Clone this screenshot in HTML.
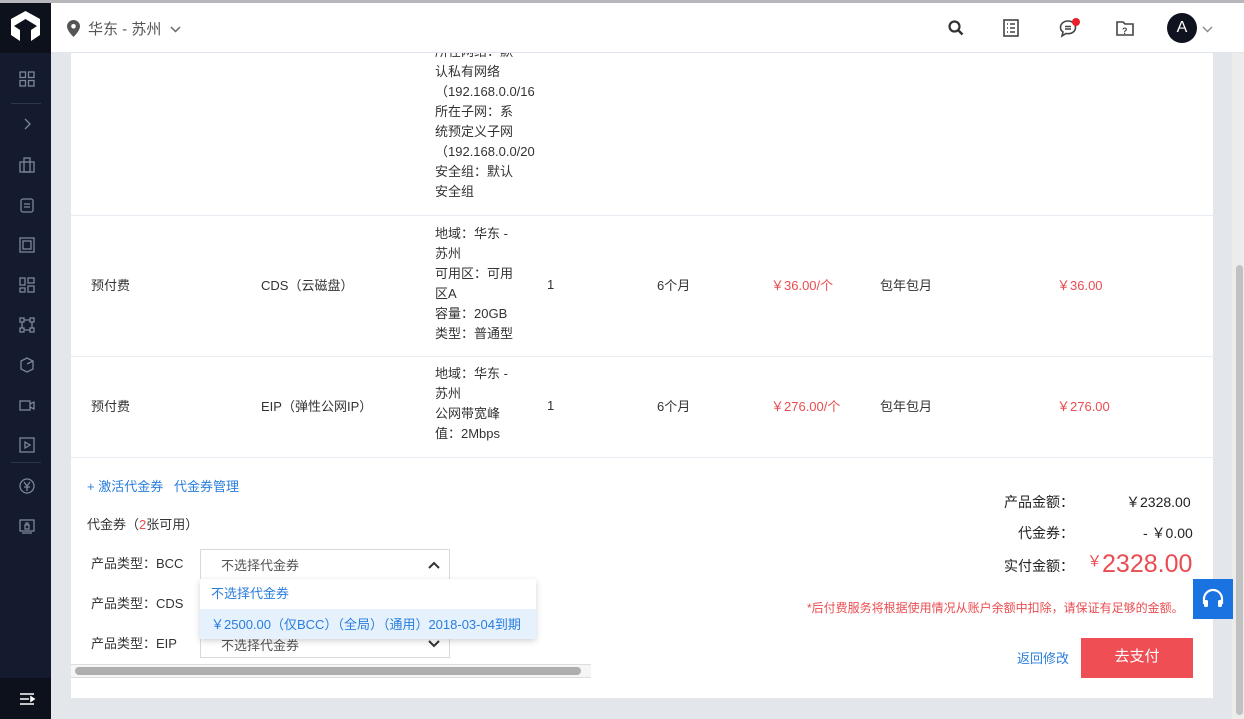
<!DOCTYPE html>
<html><head><meta charset="utf-8"><style>
*{margin:0;padding:0;box-sizing:border-box}
body{width:1244px;height:719px;overflow:hidden;background:#e3e7ec;font-family:"Liberation Sans","Noto Sans CJK SC",sans-serif;font-size:13px;color:#333;position:relative}
.a{position:absolute;white-space:nowrap}
.side{position:absolute;left:0;top:0;width:51px;height:719px;background:#141b2e;z-index:5}
.ic{position:absolute;left:18px;width:18px;height:18px}
.ic svg{width:18px;height:18px;stroke:#7c869c;fill:none;stroke-width:1.3}
.top{position:absolute;left:51px;top:3px;width:1193px;height:50px;background:#fff;border-bottom:1px solid #e0e6ee;z-index:5}
.panel{position:absolute;left:71px;top:53px;width:1142px;height:645px;background:#fff}
.hl{position:absolute;left:71px;width:1142px;height:1px;background:#e8ecf2}
.red{color:#ea4c50}
.blue{color:#2a7ddc}
.sel{position:absolute;left:200px;width:250px;height:31px;border:1px solid #d6d9de;background:#fff;padding:5px 0 0 20px;color:#555}
</style></head><body>
<div class="a" style="left:0;top:0;width:1244px;height:3px;background:#b8b8bc;z-index:6"></div>
<div class="side">
 <div style="position:absolute;left:0;top:0;width:51px;height:53px;background:#0d111c"></div>
 <svg style="position:absolute;left:9px;top:10px" width="33" height="35" viewBox="0 0 33 35"><path d="M16.5 1 L31 9 L31 25 L22 31 L22 20 L28 16 L16.5 9 L5 16 L11 20 L11 31 L2 25 L2 9 Z" fill="#fff"/></svg>
 <div style="position:absolute;left:11px;top:103px;width:30px;height:1px;background:#2e3750"></div>
 <div style="position:absolute;left:11px;top:462px;width:30px;height:1px;background:#2e3750"></div>
 <div style="position:absolute;left:0;top:678px;width:51px;height:41px;background:#0d111c"></div>
 <div class="ic" style="top:70px"><svg viewBox="0 0 18 18"><rect x="2" y="2" width="5.5" height="5.5"/><rect x="10.5" y="2" width="5.5" height="5.5"/><rect x="2" y="10.5" width="5.5" height="5.5"/><rect x="10.5" y="10.5" width="5.5" height="5.5"/></svg></div>
 <div class="ic" style="top:115px"><svg viewBox="0 0 18 18"><path d="M7 4l5 5-5 5"/></svg></div>
 <div class="ic" style="top:156px"><svg viewBox="0 0 18 18"><rect x="2" y="6" width="14" height="10"/><rect x="6" y="2" width="6" height="14"/></svg></div>
 <div class="ic" style="top:196px"><svg viewBox="0 0 18 18"><rect x="3" y="3" width="12" height="13" rx="2"/><path d="M6 8h6M6 11h6"/></svg></div>
 <div class="ic" style="top:236px"><svg viewBox="0 0 18 18"><rect x="2" y="2" width="14" height="14"/><rect x="5" y="5" width="8" height="8"/></svg></div>
 <div class="ic" style="top:276px"><svg viewBox="0 0 18 18"><rect x="2" y="2" width="5" height="7"/><rect x="10" y="2" width="6" height="5"/><rect x="2" y="12" width="5" height="4"/><rect x="10" y="10" width="6" height="6"/></svg></div>
 <div class="ic" style="top:316px"><svg viewBox="0 0 18 18"><rect x="2" y="2" width="4" height="4"/><rect x="12" y="2" width="4" height="4"/><rect x="2" y="12" width="4" height="4"/><rect x="12" y="12" width="4" height="4"/><path d="M6 4h6M6 14h6M4 6v6M14 6v6"/></svg></div>
 <div class="ic" style="top:356px"><svg viewBox="0 0 18 18"><path d="M3 5l6-3 6 3v8l-6 3-6-3z M9 8l6-3"/></svg></div>
 <div class="ic" style="top:396px"><svg viewBox="0 0 18 18"><rect x="2" y="5" width="10" height="9"/><path d="M12 8l4-2v7l-4-2"/></svg></div>
 <div class="ic" style="top:436px"><svg viewBox="0 0 18 18"><rect x="2" y="2" width="14" height="14"/><path d="M7 6l5 3-5 3z"/></svg></div>
 <div class="ic" style="top:477px"><svg viewBox="0 0 18 18"><circle cx="9" cy="9" r="7"/><path d="M6 5l3 4 3-4M9 9v5M6 10h6"/></svg></div>
 <div class="ic" style="top:517px"><svg viewBox="0 0 18 18"><rect x="2" y="3" width="14" height="11"/><path d="M4 16h10M7 8h4v4H7zM8 8V6h2v2"/></svg></div>
 <div class="ic" style="top:690px"><svg viewBox="0 0 18 18" style="stroke:#fff;stroke-width:1.6"><path d="M2 4h14M2 9h9M2 14h14"/><path d="M13 7l3 2-3 2z" fill="#fff"/></svg></div>
</div>
<div class="top">
 <svg class="a" style="left:16px;top:17px" width="13" height="17" viewBox="0 0 13 17"><path d="M6.5 0C3 0 0 2.8 0 6.3 0 11 6.5 17 6.5 17S13 11 13 6.3C13 2.8 10 0 6.5 0z" fill="#555"/><circle cx="6.5" cy="6.3" r="2.3" fill="#fff"/></svg>
 <div class="a" style="left:37px;top:15px;font-size:15px;color:#555">华东 - 苏州</div>
 <svg class="a" style="left:119px;top:23px" width="11" height="7"><path d="M1 1l4.5 4.5L10 1" stroke="#666" stroke-width="1.5" fill="none"/></svg>
 <svg class="a" style="left:897px;top:17px" width="16" height="16"><circle cx="6.5" cy="6.5" r="5" stroke="#333" stroke-width="2.2" fill="none"/><path d="M10 10l4.5 4.5" stroke="#333" stroke-width="2.5"/></svg>
 <svg class="a" style="left:952px;top:16px" width="16" height="18"><rect x="1" y="1" width="14" height="16" stroke="#444" stroke-width="1.6" fill="none"/><path d="M4 5h1M7 5h5M4 9h1M7 9h5M4 13h1M7 13h5" stroke="#444" stroke-width="1.5"/></svg>
 <svg class="a" style="left:1008px;top:15px" width="22" height="20"><path d="M9 3C4.5 3 1.5 6 1.5 9.5c0 2 1 3.5 2.5 4.5L3 18l4-2.5c.7.2 1.3.2 2 .2 4.5 0 7.5-2.8 7.5-6.2S13.5 3 9 3z" stroke="#444" stroke-width="1.6" fill="none"/><path d="M6 8.5h6M6 11h6" stroke="#444" stroke-width="1.4"/><circle cx="17" cy="4" r="4" fill="#e8202a"/></svg>
 <svg class="a" style="left:1065px;top:16px" width="18" height="17"><path d="M1 3h6l2 2h8v11H1z" stroke="#444" stroke-width="1.6" fill="none"/><text x="6" y="15" font-size="9" font-family="Liberation Sans" font-weight="bold" fill="#444">?</text></svg>
 <div class="a" style="left:1116px;top:10px;width:30px;height:30px;border-radius:50%;background:#0f1320;color:#fff;font-size:16px;text-align:center;line-height:30px">A</div>
 <svg class="a" style="left:1151px;top:23px" width="11" height="7"><path d="M1 1l4.5 4.5L10 1" stroke="#888" stroke-width="1.4" fill="none"/></svg>
</div>
<div class="a" style="left:1232px;top:53px;width:12px;height:666px;background:#ececec"></div>
<div class="a" style="left:1236px;top:265px;width:7px;height:450px;background:#c1c1c1;border-radius:4px"></div>
<div class="panel"></div>
<div class="hl" style="top:215px"></div><div class="hl" style="top:356px"></div><div class="hl" style="top:457px"></div>
<div class="a" style="left:435px;top:42px;line-height:20px">所在网络：默<br>认私有网络<br>（192.168.0.0/16<br>所在子网：系<br>统预定义子网<br>（192.168.0.0/20<br>安全组：默认<br>安全组</div>
<div class="a" style="left:435px;top:224px;line-height:20px">地域：华东 -<br>苏州<br>可用区：可用<br>区A<br>容量：20GB<br>类型：普通型</div>
<div class="a" style="left:435px;top:364px;line-height:20px">地域：华东 -<br>苏州<br>公网带宽峰<br>值：2Mbps</div>
<div class="a" style="left:91px;top:275px">预付费</div><div class="a" style="left:261px;top:275px">CDS（云磁盘）</div><div class="a" style="left:547px;top:277px">1</div><div class="a" style="left:657px;top:275px">6个月</div><div class="a red" style="left:771px;top:275px">￥36.00/个</div><div class="a" style="left:880px;top:275px">包年包月</div><div class="a red" style="left:1057px;top:275px">￥36.00</div>
<div class="a" style="left:91px;top:396px">预付费</div><div class="a" style="left:261px;top:396px">EIP（弹性公网IP）</div><div class="a" style="left:547px;top:398px">1</div><div class="a" style="left:657px;top:396px">6个月</div><div class="a red" style="left:771px;top:396px">￥276.00/个</div><div class="a" style="left:880px;top:396px">包年包月</div><div class="a red" style="left:1057px;top:396px">￥276.00</div>
<div class="a blue" style="left:87px;top:476px">+ 激活代金券 &nbsp;&nbsp;代金券管理</div>
<div class="a" style="left:87px;top:514px">代金券（<span class="red">2</span>张可用）</div>
<div class="a" style="left:91px;top:553px">产品类型：BCC</div>
<div class="a" style="left:91px;top:593px">产品类型：CDS</div>
<div class="a" style="left:91px;top:633px">产品类型：EIP</div>
<div class="sel" style="top:549px">不选择代金券<svg class="a" style="left:227px;top:11px" width="12" height="8"><path d="M1 7l5-5 5 5" stroke="#333" stroke-width="2" fill="none"/></svg></div>
<div class="sel" style="top:629px;height:29px">不选择代金券<svg class="a" style="left:227px;top:10px" width="12" height="8"><path d="M1 1l5 5 5-5" stroke="#333" stroke-width="2" fill="none"/></svg></div>
<div class="a" style="left:200px;top:579px;width:336px;height:60px;background:#fff;box-shadow:0 2px 6px rgba(0,0,0,.18)">
 <div class="a blue" style="left:11px;top:4px">不选择代金券</div>
 <div class="a blue" style="left:0;top:30px;width:336px;height:30px;background:#e5f1fd;padding:5px 0 0 11px">￥2500.00（仅BCC）（全局）（通用）2018-03-04到期</div>
</div>
<div class="a" style="left:71px;top:664px;width:520px;height:14px;border-top:1px solid #ddd;border-bottom:1px solid #ddd;background:#f6f6f6"></div>
<div class="a" style="left:75px;top:667px;width:506px;height:8px;border-radius:4px;background:#aeaeae"></div>
<div class="a" style="left:1004px;top:492px;font-size:14px;color:#222">产品金额：</div><div class="a" style="left:1126px;top:492px;font-size:14px;color:#222">￥2328.00</div>
<div class="a" style="left:1018px;top:523px;font-size:14px;color:#222">代金券：</div><div class="a" style="left:1143px;top:523px;font-size:14px;color:#222">- ￥0.00</div>
<div class="a" style="left:1004px;top:556px;font-size:14px;color:#222">实付金额：</div>
<div class="a red" style="left:1087px;top:550px;font-size:25px"><span style="font-size:15px;vertical-align:6px">￥</span>2328.00</div>
<div class="a red" style="left:807px;top:599px;font-size:12px">*后付费服务将根据使用情况从账户余额中扣除，请保证有足够的金额。</div>
<div class="a" style="left:1193px;top:579px;width:40px;height:40px;background:#1a73e0"></div>
<svg class="a" style="left:1201px;top:587px" width="24" height="24"><path d="M3 17v-5a9 9 0 0118 0v5" stroke="#fff" stroke-width="2.2" fill="none"/><rect x="3" y="13" width="4" height="7" rx="1.5" fill="#fff"/><rect x="17" y="13" width="4" height="7" rx="1.5" fill="#fff"/></svg>
<div class="a blue" style="left:1017px;top:648px">返回修改</div>
<div class="a" style="left:1081px;top:638px;width:112px;height:40px;background:#ef4e54;color:#fff;font-size:15px;text-align:center;line-height:38px">去支付</div>
</body></html>
